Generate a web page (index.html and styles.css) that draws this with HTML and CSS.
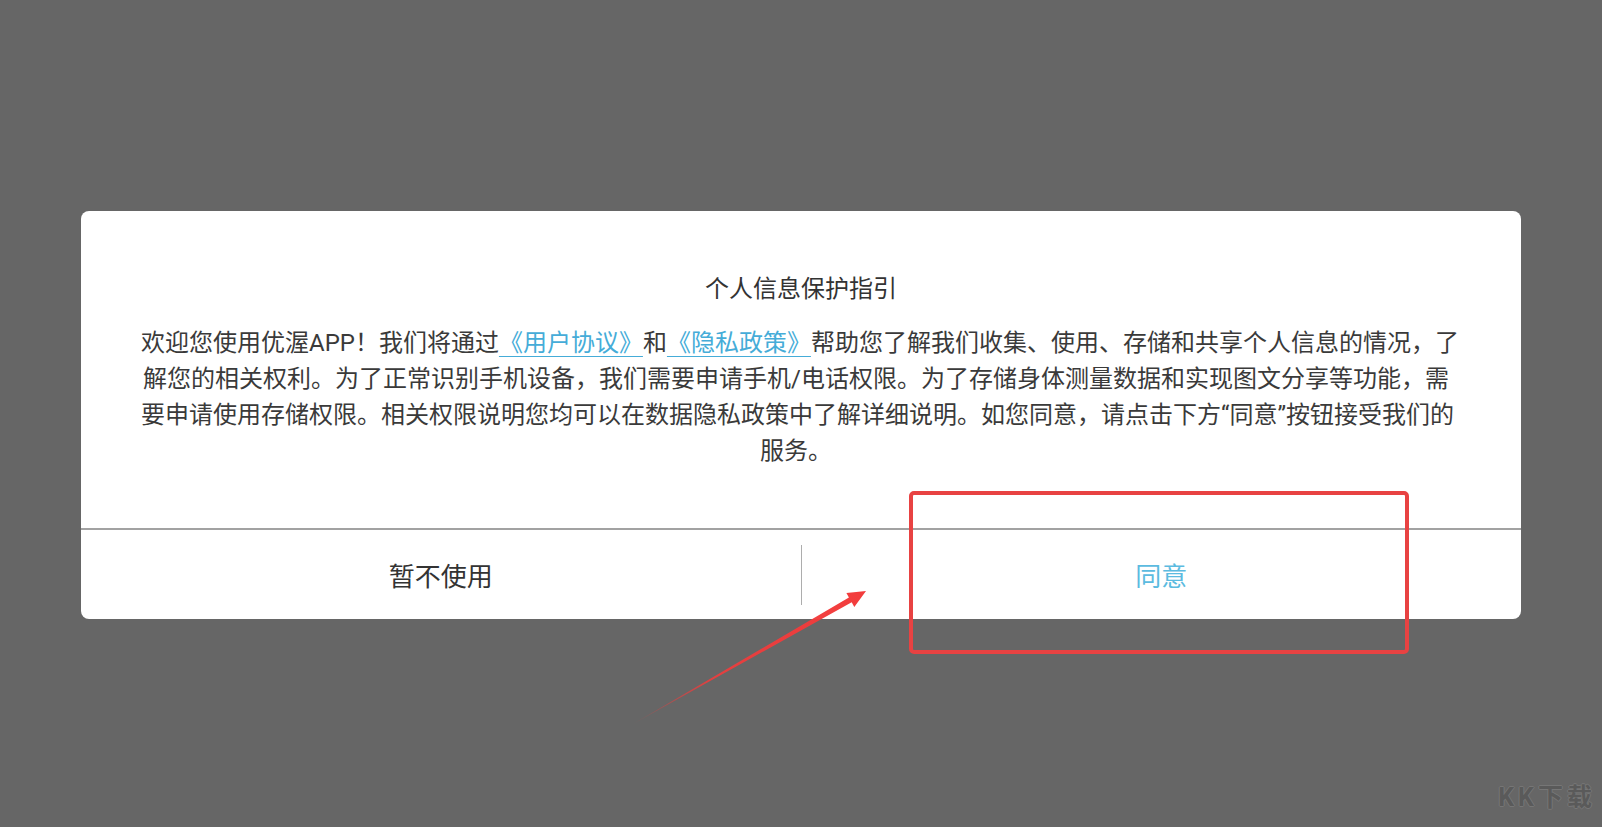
FILE: index.html
```html
<!DOCTYPE html>
<html lang="zh-CN">

<head>
    <meta charset="UTF-8">
    <meta name="viewport" content="width=device-width, initial-scale=1.0">
    <title>个人信息保护指引</title>
    <link rel="stylesheet" href="styles.css">
</head>

<body>
    <div class="mask">
        <div class="dialog">
            <div class="dialog-body">
                <h2 class="title">个人信息保护指引</h2>
                <p class="content">欢迎您使用优渥APP！我们将通过<a href="#">《用户协议》</a>和<a href="#">《隐私政策》</a>帮助您了解我们收集、使用、存储和共享个人信息的情况，了<br>解您的相关权利。为了正常识别手机设备，我们需要申请手机/电话权限。为了存储身体测量数据和实现图文分享等功能，需<br>要申请使用存储权限。相关权限说明您均可以在数据隐私政策中了解详细说明。如您同意，请点击下方“同意”按钮接受我们的<br>服务。</p>
            </div>
            <div class="dialog-btns">
                <button type="button" class="btn">暂不使用</button>
                <span class="btn-line"></span>
                <button type="button" class="btn btn-ok">同意</button>
            </div>
        </div>
    </div>

    <!-- 标注 -->
    <svg class="mark" width="1602" height="827" viewBox="0 0 1602 827">
        <defs>
            <linearGradient id="fade" gradientUnits="userSpaceOnUse" x1="633" y1="724" x2="866" y2="591">
                <stop offset="0" stop-color="#f23b3b" stop-opacity="0.15" />
                <stop offset="0.35" stop-color="#f23b3b" stop-opacity="0.9" />
                <stop offset="1" stop-color="#f23b3b" />
            </linearGradient>
        </defs>
        <rect x="911" y="493" width="496" height="159" rx="3" fill="none" stroke="#e84242" stroke-width="4" />
        <polygon points="633,724 848.9,597.5 846.4,592.9 866,591 854.3,606.9 851.7,602.3" fill="url(#fade)" />
    </svg>

    <div class="watermark">KK下载</div>
</body>

</html>
```

FILE: styles.css
```css
* {
    margin: 0;
    padding: 0;
    box-sizing: border-box;
    font-family: Roboto, "Noto Sans CJK SC", sans-serif;
}

body {
    background-color: #666666;
    width: 1602px;
    height: 827px;
    overflow: hidden;
    position: relative;
}

.mask {
    height: 100%;
    display: flex;
    justify-content: center;
    align-items: center;
    padding-top: 3px;
}

.dialog {
    width: 1440px;
    background: white;
    border-radius: 8px;
    overflow: hidden;
}

.dialog-body {
    padding: 60px 60px 59px;
    display: flex;
    flex-direction: column;
    gap: 18px;
}

.title {
    font-size: 24px;
    font-weight: normal;
    line-height: 36px;
    text-align: center;
    color: #333;
}

.content {
    font-size: 24px;
    line-height: 36px;
    text-align: center;
    color: #3a3a3a;
    white-space: nowrap;
    padding-right: 10px;
}

.content a {
    color: #45acd8;
    text-decoration: underline;
    text-underline-offset: 5px;
    text-decoration-thickness: 1px;
}

.dialog-btns {
    display: flex;
    height: 91px;
    border-top: 2px solid #a2a2a2;
}

.btn {
    flex: 1;
    border: none;
    background: transparent;
    font-size: 26px;
    color: #333;
    cursor: pointer;
}

.btn-ok {
    color: #5cbbe0;
}

.btn-line {
    width: 1px;
    margin: 15px 0 14px;
    background: #adadad;
}

.mark {
    position: absolute;
    left: 0;
    top: 0;
    pointer-events: none;
}

.watermark {
    position: absolute;
    right: 6px;
    bottom: 14px;
    font-size: 25px;
    font-weight: bold;
    letter-spacing: 4px;
    color: #5a5a5a;
    text-shadow: 1px 0 #767676, -1px 0 #767676, 0 1px #767676, 0 -1px #767676;
}
```
